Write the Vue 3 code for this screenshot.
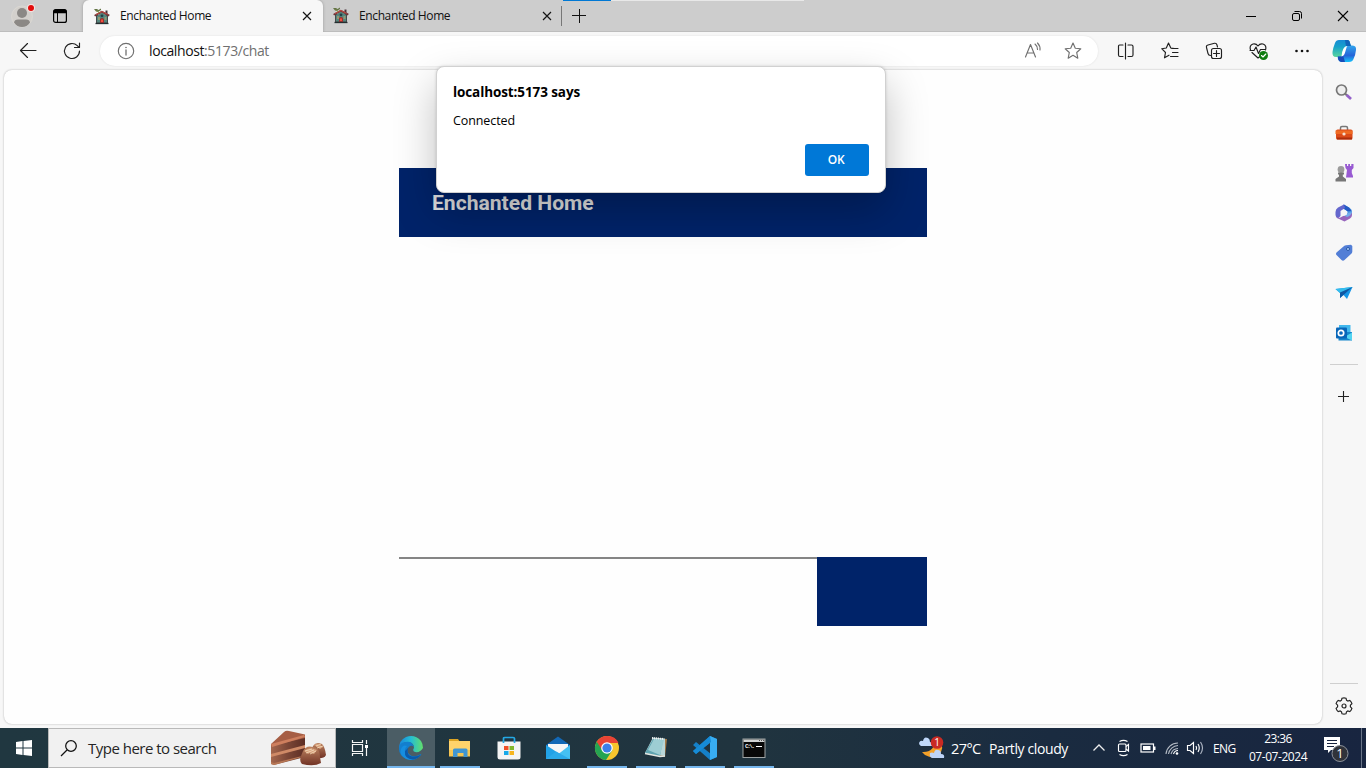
<script setup>
const tabs = [
  { title: 'Enchanted Home', active: true },
  { title: 'Enchanted Home', active: false },
]
</script>

<template>
  <div class="desktop">
    <header class="titlebar">
      <svg class="avatar" width="28" height="32" viewBox="0 0 28 32">
        <circle cx="12" cy="16.500" r="10.500" fill="#d3d0cc" stroke="#dedbd6" stroke-width=".7" />
        <circle cx="12" cy="13" r="5" fill="#8b8885" />
        <path d="M4 22.500Q4.500 19.500 8 19.500H16Q19.500 19.500 20 22.500Q17 27 12 27T4 22.500Z" fill="#8b8885" />
        <circle cx="21" cy="8" r="4" fill="#f4e3e0" /><circle cx="21" cy="8" r="3" fill="#e20c0c" />
      </svg>
      <svg class="workspaces" width="16" height="16" viewBox="0 0 16 16">
        <rect x="1.600" y="1.600" width="12.800" height="12.800" rx="2" fill="none" stroke="#000" stroke-width="1.200" />
        <path d="M1.500 5.200V3.500Q1.500 1.500 3.500 1.500H12.500Q14.500 1.500 14.500 3.500V5.200Z" /><path d="M5.500 5V14.500" stroke="#000" />
      </svg>
      <div v-for="(tab, i) in tabs" :key="i" class="tab" :class="{ active: tab.active }">
        <svg class="favicon" width="16" height="17" viewBox="0 0 16 17">
          <path d="M2 7H14V16H2Z" fill="#45494a" />
          <path d="M3 8L8 4L13 8V14.500H3Z" fill="#55857c" />
          <path d="M4 9H6V12H4ZM10.500 9H12.500V12H10.500Z" fill="#929774" />
          <path d="M11.500 2.500H13.500V7H11.500Z" fill="#4b3039" />
          <path d="M.6 7.800L7.800 3.700L15.300 7.600" stroke="#723538" stroke-width="1.800" fill="none" />
          <path d="M2 6.500L8 3.500L13.500 6.300" stroke="#c44d43" fill="none" />
          <path d="M0 1H3L4.500 2L7 .5V2L4 4L2 3.500Z" fill="#647545" />
          <path d="M3 2.500L5 5" stroke="#8b974d" />
          <circle cx="8" cy="7.800" r="1.400" fill="#213f48" />
          <path d="M6 15V11Q8 9 10 11V15Z" fill="#9c302f" /><path d="M7 11.500H9V14H7Z" fill="#f1503e" />
          <path d="M1.500 15.500H14.500" stroke="#252e30" stroke-width="1.300" />
        </svg>
        <span class="tab-title">{{ tab.title }}</span>
        <svg class="tab-close" width="10" height="10" viewBox="0 0 10 10"><path d="M1 1L9 9M9 1L1 9" stroke="#151515" stroke-width="1.150" /></svg>
      </div>
      <div class="new-tab">
        <svg width="14" height="14" viewBox="0 0 14 14"><path d="M0 6.500H14M7.500 0V14" stroke="#111" /></svg>
      </div>
      <div class="loading"><i></i></div>
      <div class="window-controls">
        <svg width="12" height="12" viewBox="0 0 12 12"><path d="M1 6.500H11" stroke="#000" /></svg>
        <svg width="12" height="12" viewBox="0 0 12 12" fill="none" stroke="#000"><rect x="1.500" y="3.500" width="7" height="7" rx="1.500" /><path d="M3.500 1.500H8.500Q10.500 1.500 10.500 3.500V8.500" /></svg>
        <svg width="12" height="12" viewBox="0 0 12 12"><path d="M1 1L11 11M11 1L1 11" stroke="#000" stroke-width="1.100" /></svg>
      </div>
    </header>

    <nav class="toolbar">
      <svg class="ico" viewBox="0 0 24 24"><path d="M20 11.500H4.500M11.500 4.500L4.500 11.500L11.500 18.500" /></svg>
      <svg class="ico refresh" viewBox="0 0 24 24"><path d="M19.500 12A7.500 7.500 0 1 1 17.300 6.700L19 8.400M19.500 4V8.500H14.500" /></svg>
      <div class="address">
        <svg class="ico info" viewBox="0 0 24 24"><circle cx="12" cy="12" r="7.700" /><path d="M12 11V16" stroke-width="1.300" /><circle cx="12" cy="8.500" r=".8" fill="#707070" stroke="none" /></svg>
        <span class="url"><b>localhost</b>:5173/chat</span>
        <svg class="ico read" viewBox="0 0 24 24"><path d="M4.500 18L9.500 5.500L14.500 18M6.300 14H12.800M14 5Q16.500 7 16.500 10.500M16.500 4Q19.500 7 19 11" /></svg>
        <svg class="ico star" viewBox="0 0 24 24"><path d="M12 4L14.300 9.200L19.800 9.800L15.700 13.500L16.800 19.200L12 16.300L7.200 19.200L8.300 13.500L4.200 9.800L9.700 9.200Z" /></svg>
      </div>
      <svg class="ico split" viewBox="0 0 24 24"><path d="M9 6H5.500Q4.500 6 4.500 7V16Q4.500 17.500 6 17.500H9M14 6H17.500Q19 6 19 7.500V16Q19 17.500 17.500 17.500H14M11.500 4V20" /></svg>
      <svg class="ico" viewBox="0 0 24 24"><path d="M16.500 9.500L12.800 9L10.500 4L8.300 9L3.700 9.700L7.500 13.500L6.500 18.800L11 16.200M13.500 9.500H20M14.500 13.500H20M12.500 17.500H20" /></svg>
      <svg class="ico" viewBox="0 0 24 24"><path d="M8.500 16.500Q6.500 16.500 6 14.500L4.500 8.500Q4 6.500 6 6L12.500 4.300Q14.500 4 15 6L15.500 8" /><rect x="9.500" y="9.500" width="10" height="10" rx="2" /><path d="M14.500 11.500V17.500M11.500 14.500H17.500" /></svg>
      <svg class="ico" viewBox="0 0 24 24"><path d="M4.500 11Q3 6.500 7 5Q10 4.200 12 7Q14 4.200 17 5Q21 6.500 19.500 11M4 11.500H8L10 8L12.500 14.500L14.500 10.500H19M6 13.500L12 19L14 17.500" /><circle cx="17.500" cy="16.500" r="4.500" fill="#107c10" stroke="none" /><path d="M15.500 16.500L17 18L19.800 15" stroke="#fff" /></svg>
      <svg class="ico" viewBox="0 0 24 24"><g fill="#111" stroke="none"><circle cx="6.500" cy="12" r="1.300" /><circle cx="12" cy="12" r="1.300" /><circle cx="17.500" cy="12" r="1.300" /></g></svg>
      <svg class="copilot" width="24" height="24" viewBox="0 0 24 24">
        <defs>
          <linearGradient id="cpa" x2="0" y2="1"><stop stop-color="#178bd4" /><stop offset=".4" stop-color="#16a1ca" /><stop offset="1" stop-color="#5bd69d" /></linearGradient>
          <linearGradient id="cpb" x2="0" y2="1"><stop stop-color="#31a5ed" /><stop offset=".6" stop-color="#2464d8" /><stop offset="1" stop-color="#18c2fa" /></linearGradient>
        </defs>
        <path d="M7 1H15.500Q17.500 1 18 4L19 7H16Q13 7 12 11L10 17Q9.400 18 7 18H4Q0 18 .5 13Q1 9 3 4Q4 1 7 1Z" fill="url(#cpa)" />
        <path d="M17 6.500H20Q24.500 6.500 24 11Q23.500 16 21.500 20Q20.500 23 17 23H9Q7 23 6 20L5.500 17.500H8Q11 17.500 12 13L14 8Q14.600 6.500 17 6.500Z" fill="url(#cpb)" />
        <path d="M13 1H15.500Q17.500 1 18 4L19 7H16Q14.500 7 14 7.500Z" fill="#1164b9" /><path d="M6 17.500H8Q10 17.500 11 16L13 23H9Q7 23 6 20Z" fill="#184bb9" />
        <path d="M15.500 7Q10.500 6.500 9.500 17.500Q12.500 17 13.500 12L14.800 7.800Z" fill="#fff" />
      </svg>
    </nav>

    <div class="workspace">
      <main class="page">
        <section class="chat">
          <div class="chat-header"><h1>Enchanted Home</h1></div>
          <div class="messages"></div>
          <div class="composer"><div class="entry"></div><div class="send"></div></div>
        </section>
      </main>
      <aside class="sidebar">
        <svg width="20" height="20" viewBox="0 0 20 20"><circle cx="7.500" cy="7" r="5" fill="#eee" stroke="#777" stroke-width="1.700" /><path d="M11.300 10.800L13 12.500" stroke="#777" stroke-width="2" /><path d="M12.700 12L17 16" stroke="#9461c9" stroke-width="2.800" /></svg>
        <svg width="20" height="20" viewBox="0 0 20 20"><path d="M6.500 7V5Q6.500 3.500 8 3.500H12Q13.500 3.500 13.500 5V7" fill="none" stroke="#777" stroke-width="1.500" /><rect x="2" y="6.500" width="16.500" height="10" rx="1.500" fill="#dc4b18" /><path d="M1.500 7.500H18.500V11H1.500Z" fill="#ef6a22" /><path d="M3 15.500H18" stroke="#ac2d0b" stroke-width="2" /><circle cx="10" cy="11" r="1.600" fill="#f5e1d2" /></svg>
        <svg width="20" height="20" viewBox="0 0 20 20"><path d="M11 1H13V3H14.200V1H16V3H17.300V1H19.500V5L17.800 7V10L19 13V14.500H12L13 7L11.500 5Z" fill="#985ad2" /><circle cx="7" cy="6.500" r="3.400" fill="#9b9b9b" /><path d="M4 9.500H10V11.500H8.800V13.500L12 16V18.500H1.500V16L5 13.500V11.500H4Z" fill="#777" /></svg>
        <svg width="20" height="20" viewBox="0 0 20 20">
          <path d="M9.500 1.500L15.500 4.800Q18 6.200 18 9V12L13.500 14.500V8.500L8 5Z" fill="#4894e2" />
          <path d="M10 1.500L15 4.500L17.500 8L13.500 8.200L8 4.500Z" fill="#245ac5" />
          <path d="M10 1.500L4 4.500Q1.500 6 1.500 9V12Q1.500 14 4 15.500L6.500 13V8L11 5Z" fill="#6467cd" />
          <path d="M2 13Q3.500 15.500 6.500 14.500L13.500 10.500L18 10V12Q18 14 16 15.500L10.500 18.500L4 15.500Q2.500 14.500 2 13Z" fill="#9866bd" />
          <path d="M18 9Q17 13 13 14L10 12.500L13.500 10Z" fill="#75aceb" /><path d="M7 8.200L10 6.500L13 8.200V11.500L10 13L7 11.500Z" fill="#f7f7f7" />
        </svg>
        <svg width="20" height="20" viewBox="0 0 20 20"><path d="M9.500 3.500Q10 2.500 12 2.300L17 1.800L18.300 3V8Q18.500 10 17 11L10.500 17Q9 18.500 7.500 17L2.500 12Q1.500 11 2.500 9.500Z" fill="#527ed6" /><circle cx="14" cy="6" r="1.500" fill="#b7daff" stroke="#2756a7" /></svg>
        <svg width="20" height="20" viewBox="0 0 20 20"><path d="M1.500 6L18.500 4L13 16L9.500 12L6 15V10Z" fill="#1696e7" /><path d="M1.500 6L18.500 4L7 11Z" fill="#35bded" /><path d="M6 9.500L18.500 4L6 15Z" fill="#1057a2" /></svg>
        <svg width="20" height="20" viewBox="0 0 20 20"><path d="M5 2H16.500V12H5Z" fill="#42b8ed" /><path d="M8 9L18 9V17.500H4.500V11Z" fill="#1585cb" /><path d="M18 9.500L10.500 14L18 17.500Z" fill="#52d4f1" /><rect x="2" y="4.500" width="11" height="11" rx="1" fill="#0866b9" /><circle cx="7" cy="10" r="2.700" fill="none" stroke="#fff" stroke-width="1.700" /></svg>
        <hr>
        <svg class="add" width="20" height="20" viewBox="0 0 20 20"><path d="M4 10.500H15M9.500 5V16" stroke="#222" stroke-width="1.100" /></svg>
        <div class="grow"></div>
        <hr>
        <svg class="gear" width="20" height="20" viewBox="0 0 20 20" fill="none" stroke="#252525" stroke-width="1.200"><path d="M7.500 4.200L8 2.200Q10 1.600 12 2.200L12.500 4.200Q13.500 4.800 13.800 5L15.800 4.400Q17.500 6 17.900 7.700L16.400 9.200V10.800L17.900 12.300Q17.300 14.300 15.800 15.600L13.800 15L12.500 15.800L12 17.800Q10 18.400 8 17.800L7.500 15.800L6.200 15L4.200 15.600Q2.700 14.300 2.100 12.300L3.600 10.800V9.200L2.100 7.700Q2.700 5.700 4.200 4.400L6.200 5Z" /><circle cx="10" cy="10" r="2" /></svg>
      </aside>
    </div>

    <footer class="taskbar">
      <div class="start"><svg width="18" height="18" viewBox="0 0 18 18" fill="#fff"><path d="M1 3L7.500 2V8.500H1ZM8.500 2L17 1V8.500H8.500ZM1 9.500H7.500V16L1 15ZM8.500 9.500H17V17L8.500 16Z" /></svg></div>
      <div class="search">
        <svg width="18" height="18" viewBox="0 0 18 18" fill="none" stroke="#111" stroke-width="1.250"><circle cx="11" cy="7" r="5.300" /><path d="M7 11L1 17" /></svg>
        <span class="search-text">Type here to search</span>
        <svg class="cake" width="58" height="36" viewBox="0 0 58 36">
          <defs><linearGradient id="cakeg"><stop stop-color="#a4674e" /><stop offset=".5" stop-color="#7b4636" /><stop offset="1" stop-color="#5c2d24" /></linearGradient><linearGradient id="bon" x2="0" y2="1"><stop stop-color="#bc8360" /><stop offset="1" stop-color="#713325" /></linearGradient></defs>
          <path d="M1 15L35 6V25L31 28L4 35L1 34Z" fill="url(#cakeg)" /><path d="M1 14L14 2Q16 0 19 1L35 4.500V8L1 16Z" fill="#a65e45" /><path d="M1 14L34 5L35 7L2 17Z" fill="#ce7f5e" />
          <path d="M1 24L35 15V18L1 27Z" fill="#cf8a67" /><path d="M1 32L4 33L30 26.500L32 27L4 35L1 34Z" fill="#b87856" />
          <path d="M43 16Q46 11 52 14Q55 17 56 25Q54 29 46 28L41 22Z" fill="url(#bon)" />
          <path d="M33 21Q36 15 43 17Q50 18 50 27L51 33Q44 37 32 34Q29 31 31 26Z" fill="url(#bon)" />
          <path d="M34 21Q39 16 47 20L44 24Q40 22 38 24Z" fill="#d6a07c" /><path d="M44 15Q48 12 53 17L50 19Z" fill="#d6a07c" />
          <path d="M35 21L42 19M36 23L44 20M40 24L46 21M46 16L51 14M47 18L53 16" stroke="#f6dfbd" stroke-width=".8" />
        </svg>
      </div>
      <div class="task taskview"><svg width="18" height="18" viewBox="0 0 18 18" fill="none" stroke="#f5f5f5" stroke-width="1.200"><path d="M1.500 1V3.500H11.500V1M1.500 17V14.500H11.500V17M1.500 5.500H11.500V12.500H1.500ZM15.500 1V5M15.500 9V17" /><path d="M14 6H17V9H14Z" fill="#fff" stroke="none" /></svg></div>
      <div class="task edge on">
        <svg width="26" height="26" viewBox="0 0 26 26"><defs><linearGradient id="ed" x2="1"><stop stop-color="#1786de" /><stop offset=".5" stop-color="#25bdd3" /><stop offset="1" stop-color="#62df6b" /></linearGradient></defs><path d="M1 14Q1 5 8 2Q17-1 23 6Q25 9 25 13Q22 18 17 17Q14 16 16 13Q16 8 11 7Q4 6 1 14Z" fill="url(#ed)" /><path d="M1 14Q1 7 8 7Q14 6 16 12Q13 9 10 13Q8 17 12 20Q16 23 23 19Q24 19 22 21Q16 27 9 24Q1 21 1 14Z" fill="#137fce" /><path d="M9 11Q5 15 8 20Q12 26 20 22Q14 26 8 24Q1 20 3 14Q5 9 9 11Z" fill="#168ee0" /><path d="M10 13Q8 20 14 21.500Q20 22 23 19.500Q20 24 15 24.500Q6 24 7 16Z" fill="#0b5aab" /></svg>
      </div>
      <div class="task on">
        <svg width="24" height="24" viewBox="0 0 24 24"><path d="M1 3H10L12 6H1Z" fill="#dda424" /><path d="M1 5H22V20H1Z" fill="#ffd36b" /><path d="M1 14H22V20.500H1Z" fill="#f5c552" /><path d="M5 21V14Q5 12.500 6.500 12.500H18Q19.500 12.500 19.500 14V21H15.500V17H9.500V21Z" fill="#3f95d2" /></svg>
      </div>
      <div class="task">
        <svg width="26" height="26" viewBox="0 0 26 26"><path d="M1.500 6.500H24.500V22Q24.500 24.500 22 24.500H4Q1.500 24.500 1.500 22Z" fill="#f4f4f4" /><path d="M7.500 8V3.500Q7.500 2.500 9 2.500H17Q18.500 2.500 18.500 3.500V8" fill="none" stroke="#24a9e5" stroke-width="1.700" /><path d="M8 11H12.500V15H8Z" fill="#ef5028" /><path d="M13.500 11H18V15H13.500Z" fill="#83b82c" /><path d="M8 16H12.500V20H8Z" fill="#18a9e9" /><path d="M13.500 16H18V20H13.500Z" fill="#f7b51d" /></svg>
      </div>
      <div class="task">
        <svg width="26" height="26" viewBox="0 0 26 26"><path d="M1 10L13 1.500L25 10V18H1Z" fill="#1268b6" /><path d="M3 9H23V17L13 19L3 13Z" fill="#f6f6f6" /><path d="M1 10L14 18.500L8 24H1Z" fill="#22a2e7" /><path d="M25 10L7 24H25Z" fill="#45c0f2" /><path d="M1 24L11 16.500L25 24Z" fill="#2caaea" /></svg>
      </div>
      <div class="task on">
        <svg width="26" height="26" viewBox="0 0 26 26"><circle cx="13" cy="13" r="12" fill="#f8c62d" /><path d="M13 13L2.800 6.500A12 12 0 0 0 12 25L18.500 15Z" fill="#25a452" /><path d="M13 1A12 12 0 0 1 24.500 8H13L8 15L2.800 6.700A12 12 0 0 1 13 1Z" fill="#e94335" /><circle cx="13" cy="13" r="5.800" fill="#fff" /><circle cx="13" cy="13" r="4.600" fill="#3c7fea" /></svg>
      </div>
      <div class="task on">
        <svg width="26" height="26" viewBox="0 0 26 26"><path d="M11 3L24 4L22 22L4 19Z" fill="#a1794a" /><path d="M10 2.500L22 3.500L22 21L2 18Z" fill="#b9d6d8" /><path d="M10 4L20 5L17 21L2 18Z" fill="#5fa3b0" /><path d="M11 4L21 5L17 20L5 15Z" fill="#9dcdd3" /><path d="M9 3L21 4" stroke="#eee" stroke-dasharray="1 1" stroke-width="2" /><path d="M2 18.500L17 21.500L22 21" fill="none" stroke="#e3e8e5" stroke-width="1.300" /></svg>
      </div>
      <div class="task on">
        <svg width="26" height="26" viewBox="0 0 26 26"><path d="M18 1L25 4V22L18 25L1 10L4 7L19 19V7L4 19L1 16Z" fill="#1580c8" /><path d="M18 1L25 4V22L18 25Z" fill="#38adf2" /><path d="M1 16L18 1L19 7L4 19Z" fill="#168bd6" /></svg>
      </div>
      <div class="task on">
        <svg width="24" height="22" viewBox="0 0 24 22"><rect x="1" y="2" width="22" height="18.500" fill="#080808" stroke="#9ea3a4" /><path d="M1.500 2.500H22.500V5H1.500Z" fill="#d1d3d3" /><path d="M17 3.500H18M19 3.500H20M21 3.500H22" stroke="#555" /><text x="3" y="11" fill="#f5f5f5" font-family="Liberation Mono, monospace" font-weight="700" font-size="6" textLength="10">C:\.</text><path d="M14 9.500H20" stroke="#fff" /></svg>
      </div>
      <div class="tray">
        <svg class="weather" width="28" height="26" viewBox="0 0 28 26"><path d="M18 4Q27 8 23 17Q18 26 7 20L4 17Q16 18 18 4Z" fill="#f3a129" /><path d="M3 11Q1 10 1 8Q2 5 5 6Q6 1 10 3Q12 4 12 7Q16 7 15 11Z" fill="#bfd8fa" /><path d="M14 23Q11 22 12 18Q14 17 16 18Q17 14 20 15Q23 15 23 19Q27 19 26 23Z" fill="#bdd3f7" /><circle cx="19" cy="7.500" r="6.300" fill="#c92a23" /><text x="19" y="11" text-anchor="middle" font-size="10" fill="#fff" font-family="Open Sans, sans-serif">1</text></svg>
        <span class="temp">27°C</span><span class="forecast">Partly cloudy</span>
        <svg class="caret" width="14" height="14" viewBox="0 0 14 14" fill="none" stroke="#eee" stroke-width="1.250"><path d="M1.500 9.500L7 4L12.500 9.500" /></svg>
        <svg class="meet" width="16" height="18" viewBox="0 0 16 18" fill="none" stroke="#fff" stroke-width="1.150"><path d="M4.500 2.500Q8.500 .2 12.500 2.500M4.500 15.500Q8.500 17.800 12.500 15.500" /><rect x="3.500" y="5" width="7.500" height="7.500" rx="1" /><path d="M11 7.500L13.500 5.500V12L11 10" /></svg>
        <svg class="battery" width="16" height="12" viewBox="0 0 16 12"><rect x="1" y="2" width="12.500" height="8" fill="none" stroke="#fff" stroke-width="1.200" /><path d="M3 4H10.500V8H3ZM14 4.500H15.500V8H14Z" fill="#fff" /></svg>
        <svg class="wifi" width="16" height="16" viewBox="0 0 16 16" fill="none" stroke="#b4bbc5" stroke-width="1.100"><path d="M2 14A12 12 0 0 1 14 3M4.500 14A10 10 0 0 1 14 5.500M7 14A7.500 7.500 0 0 1 14 8.500" /><path d="M9.500 14A5 5 0 0 1 14 10.500" stroke="#fff" /><circle cx="13" cy="13.500" r="1.300" fill="#fff" stroke="none" /></svg>
        <svg class="volume" width="18" height="16" viewBox="0 0 18 16" fill="none" stroke="#fff" stroke-width="1.150"><path d="M1.500 5.500H4L7.500 2.500V13.500L4 10.500H1.500ZM10 6Q11.200 8 10 10M12 4Q14.500 8 12 12" /><path d="M14.500 2Q18.500 8 14.500 14" stroke="#aeb6c4" /></svg>
        <span class="lang">ENG</span>
        <div class="clock"><span>23:36</span><span class="date">07-07-2024</span></div>
        <svg class="notify" width="28" height="28" viewBox="0 0 28 28"><path d="M2 1H18V14H9L6 17V14H2Z" fill="#fff" /><path d="M5 4.500H15M5 7.500H15M5 10.500H12" stroke="#17243e" /><circle cx="18" cy="17.500" r="8" fill="#30333a" stroke="#8d929a" /><text x="18" y="22" text-anchor="middle" fill="#fff" font-size="13" font-family="Open Sans, sans-serif">1</text></svg>
        <i class="show-desktop"></i>
      </div>
    </footer>

    <div class="dialog" role="alertdialog">
      <h2>localhost:5173 says</h2>
      <p>Connected</p>
      <button>OK</button>
    </div>
  </div>
</template>

<style>
body { margin: 0; overflow: hidden; }
</style>

<style scoped>
* { box-sizing: border-box; }
svg { display: block; flex: none; }
.desktop { position: relative; width: 1366px; height: 768px; overflow: hidden; display: flex; flex-direction: column; background: #f7f7f7; font-family: "Open Sans", "Noto Sans", sans-serif; color: #111; }
.titlebar { position: relative; height: 32px; display: flex; background: #cdcdcd; border-bottom: 1px solid #bdbdbd; }
.avatar { margin-left: 10px; }
.workspaces { margin: 8px 15px 0 14px; }
.tab { width: 239px; height: 31px; display: flex; align-items: center; padding-left: 10px; font-size: 12px; border-radius: 0 0 0 5px; }
.tab.active { width: 240px; height: 32px; padding-left: 11px; background: #f7f7f7; border-radius: 6px 6px 0 0; box-shadow: 0 0 3px #999; clip-path: inset(0 -3px 0 -3px); }
.tab-title { width: 180px; margin-left: 10px; white-space: nowrap; letter-spacing: -.38px; line-height: 18px; }
.tab-close { margin-left: 3px; }
.tab.active .tab-close { margin-left: 2px; }
.new-tab { height: 20px; margin-top: 6px; margin-left: -1px; padding: 3px 0 0 10px; border-left: 1px solid #777; }
.loading { position: absolute; left: 563px; top: 0; width: 241px; height: 1px; background: #e8e8e8; }
.loading i { display: block; width: 48px; height: 1px; background: #0078d4; }
.window-controls { margin-left: auto; padding: 10px 17px 0 0; display: flex; gap: 34px; }
.toolbar { height: 38px; display: flex; align-items: center; padding-left: 16px; gap: 20px; }
.ico { width: 24px; height: 24px; fill: none; stroke: #202020; stroke-width: 1.15; stroke-linejoin: round; stroke-linecap: round; }
.refresh { margin-right: -4px; }
.address { width: 998px; height: 30px; border-radius: 15px; display: flex; align-items: center; padding: 0 13px 0 14px; background: #fff; box-shadow: 0 0 2px #ddd; }
.address .ico { stroke: #707070; }
.url { margin-left: 11px; font-size: 14px; line-height: 20px; color: #707070; letter-spacing: -.4px; }
.url b { font-weight: 400; color: #111; }
.read { margin-left: auto; }
.star { margin-left: 16px; }
.split { margin-left: -4px; }
.copilot { margin-left: -2px; }
.workspace { height: 658px; display: flex; padding: 0 0 4px 4px; }
.page { width: 1318px; height: 654px; padding: 98px 0 0 395px; border-radius: 8px; background: #fefefe; box-shadow: 0 0 2px #aaa; }
.chat { width: 528px; }
.chat-header { height: 69px; background: #002369; padding: 1px 0 0 33px; display: flex; align-items: center; }
h1 { margin: 0; font: 700 21.1px/28px Roboto, sans-serif; color: #dedede; }
.messages { height: 320px; }
.composer { display: flex; height: 69px; }
.entry { width: 418px; border-top: 2px solid #858585; }
.send { width: 110px; background: #002369; }
.sidebar { width: 44px; display: flex; flex-direction: column; align-items: center; gap: 20px; padding-top: 13px; }
.sidebar hr { width: 28px; height: 1px; margin: 1px 0 0; border: 0; background: #cfcfcf; }
.add { margin-top: 1px; }
.grow { flex: 1; margin: -11px 0; }
.gear { margin: -8px 0 8px; }
.taskbar { height: 40px; display: flex; background: linear-gradient(90deg, #203740, #20343f 55%, #1a2b40 77%, #182540); color: #fff; }
.start { width: 48px; display: flex; align-items: center; justify-content: center; }
.search { width: 288px; display: flex; align-items: center; padding-left: 11px; background: #f1f1f1; border: 1px solid #b9b9b9; color: #252525; }
.search-text { width: 181px; margin-left: 10px; white-space: nowrap; font-size: 15px; letter-spacing: -.51px; }
.cake { margin-left: 1px; }
.task { width: 48px; margin-right: 1px; display: flex; align-items: center; justify-content: center; position: relative; }
.taskview { width: 48px; margin-right: 3px; }
.task.on::after { content: ''; position: absolute; left: 4px; right: 4px; bottom: 0; height: 2px; background: #75b6ed; }
.edge { background: #4b5d65; }
.task.edge::after { left: 0; right: 0; }
.tray { width: 448px; margin-left: auto; display: flex; align-items: center; white-space: nowrap; font-size: 12px; }
.temp { width: 38px; margin-left: 5px; font-size: 14.5px; letter-spacing: -.6px; }
.forecast { width: 80px; font-size: 14px; letter-spacing: -.38px; }
.caret { margin-left: 23px; }
.meet { margin-left: 9px; }
.battery { margin-left: 9px; }
.wifi { margin-left: 8px; }
.volume { margin-left: 6px; }
.lang { width: 24px; margin-left: 9px; letter-spacing: -.6px; }
.clock { width: 72px; margin-left: 5px; display: flex; flex-direction: column; align-items: center; line-height: 18px; letter-spacing: -.6px; padding-bottom: 1px; }
.date { letter-spacing: -.45px; }
.notify { margin-left: 8px; margin-top: 4px; }
.show-desktop { width: 1px; height: 40px; background: #697487; margin-left: auto; margin-right: 4px; }
.dialog { position: absolute; left: 436px; top: 66px; width: 450px; height: 127px; padding: 15px 16px 16px; border: 1px solid #d1d1d1; border-radius: 8px; background: #fff; display: flex; flex-direction: column; box-shadow: 0 18px 42px rgba(0, 0, 0, .25), 0 0 3px rgba(0, 0, 0, .15); color: #000; }
.dialog h2 { margin: 0; font-size: 13.5px; line-height: 20px; font-weight: 700; letter-spacing: -.1px; }
.dialog p { margin: 9px 0 13px; font-size: 12.5px; line-height: 20px; letter-spacing: -.1px; }
.dialog button { align-self: flex-end; flex: none; width: 64px; height: 32px; border: 0; border-radius: 3px; background: #0078d7; color: #fff; font: 600 12px/18px "Open Sans", sans-serif; letter-spacing: -.2px; padding: 0 2px 0 0; }
</style>
